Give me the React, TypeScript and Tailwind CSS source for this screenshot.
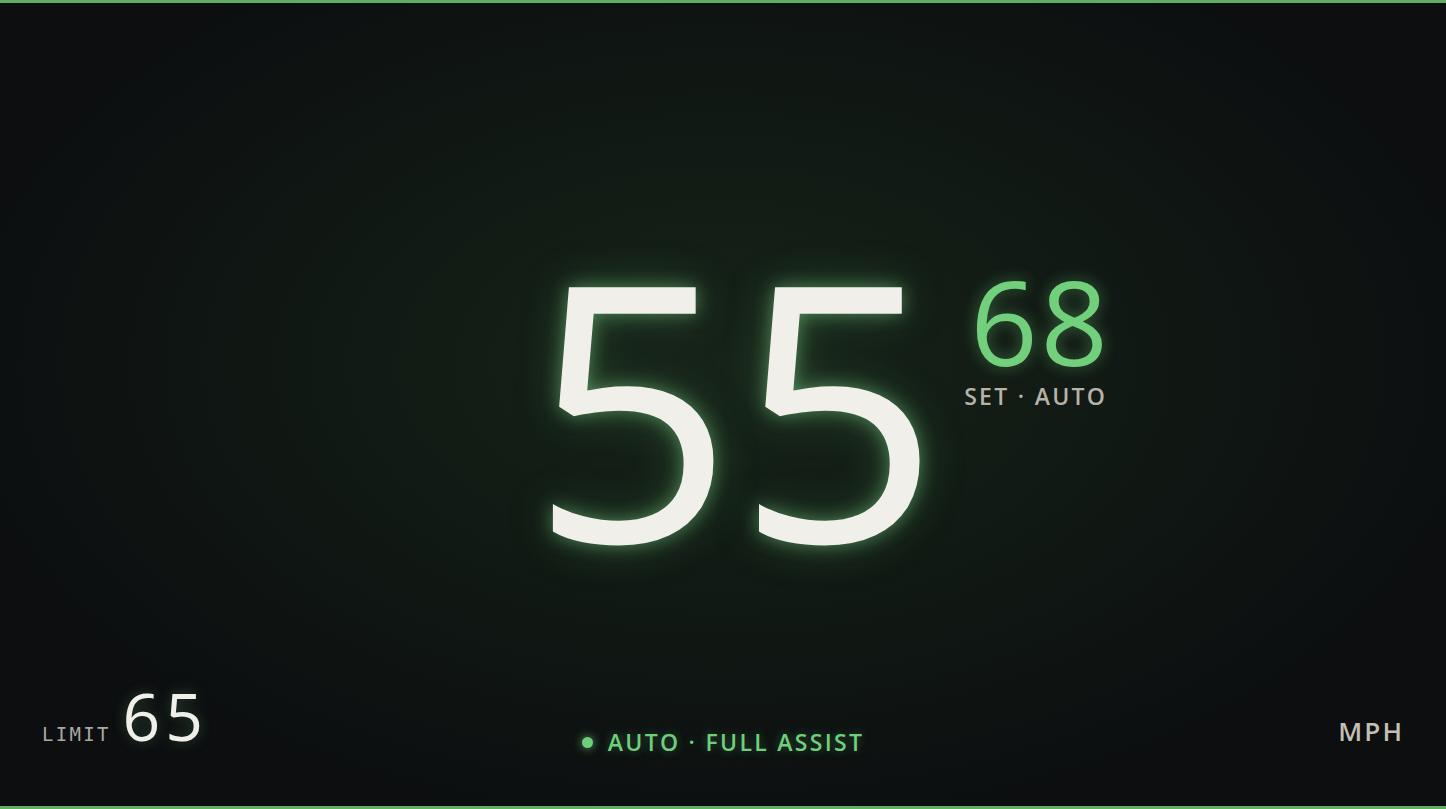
export default function App() {
  return (
    <div
      className="relative flex h-[809px] w-full flex-col overflow-hidden border-y-[3px] border-[#5fae63] bg-[#0c0e10] bg-[radial-gradient(ellipse_55%_60%_at_50%_45%,#172419_0%,#111a14_45%,#0c0e10_100%)] text-[#f1efea]"
      style={{ fontFamily: '"Open Sans", "Noto Sans", sans-serif' }}
    >
      <main className="flex flex-1 items-start justify-center pl-[26px] pt-[222px]">
        <div className="relative">
          <div className="text-[357px] font-normal leading-none tracking-[2px] [text-shadow:0_0_18px_rgba(120,200,130,0.55),0_0_44px_rgba(90,170,100,0.35)]">
            55
          </div>
          <div className="absolute left-[calc(100%+28px)] top-[37px] flex flex-col items-start">
            <div className="text-[118px] font-normal leading-none tracking-[3px] text-[#72cf7c] [text-shadow:0_0_16px_rgba(110,200,120,0.45)]">
              68
            </div>
            <div className="-ml-[6px] mt-[5px] whitespace-nowrap text-[23px] font-semibold leading-none tracking-[0.1em] text-[#b8b3a8]">
              SET · AUTO
            </div>
          </div>
        </div>
      </main>

      <footer className="flex items-end justify-between px-[42px] pb-[52px]">
        <div className="mb-[6px] flex w-[300px] items-baseline gap-[12px]">
          <span
            className="text-[19px] leading-none tracking-[0.12em] text-[#a9a8a1]"
            style={{ fontFamily: '"DejaVu Sans Mono", "Liberation Mono", monospace' }}
          >
            LIMIT
          </span>
          <span className="text-[66px] leading-none tracking-[5px] [text-shadow:0_0_14px_rgba(120,200,130,0.35)]">
            65
          </span>
        </div>
        <div className="flex items-center gap-[15px]">
          <span className="h-[11px] w-[11px] rounded-full bg-[#6fcf7d] shadow-[0_0_10px_rgba(110,210,125,0.8)]" />
          <span className="text-[23px] font-semibold leading-none tracking-[0.1em] text-[#6fcf7d] [text-shadow:0_0_10px_rgba(110,210,125,0.35)]">
            AUTO · FULL ASSIST
          </span>
        </div>
        <div className="mb-[10px] flex w-[300px] justify-end">
          <span className="text-[26px] font-semibold leading-none tracking-[0.08em] text-[#c3bfb4]">
            MPH
          </span>
        </div>
      </footer>
    </div>
  );
}
